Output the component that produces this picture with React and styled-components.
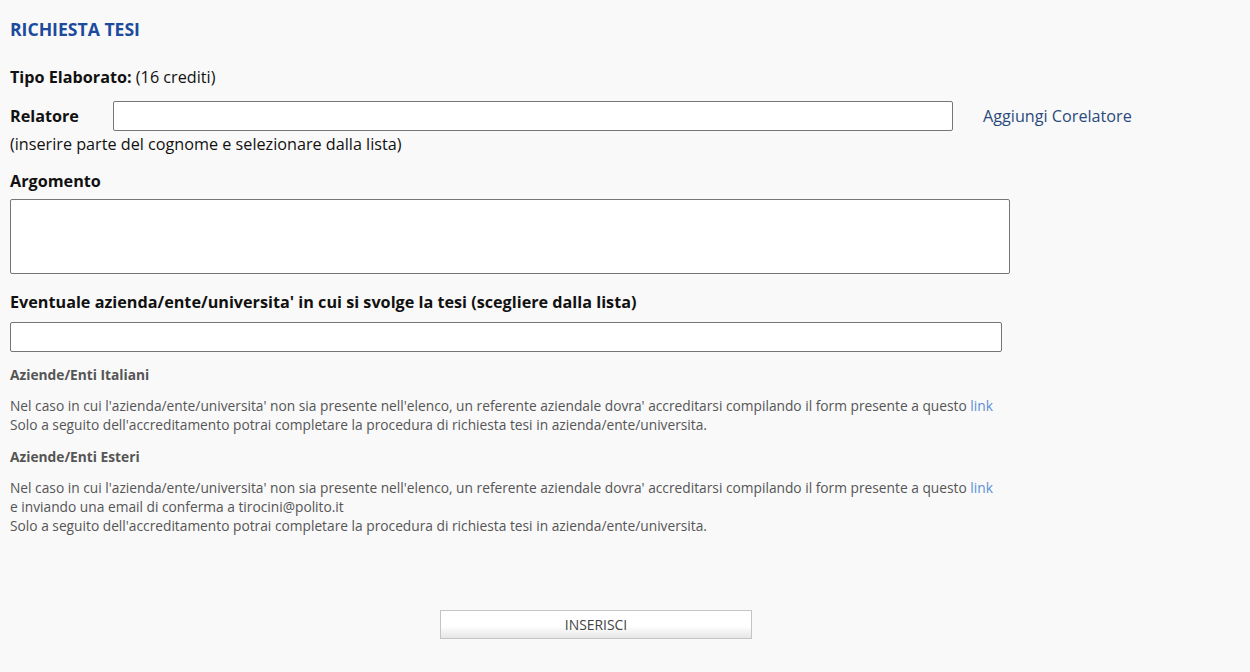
import React from "react";
import styled, { createGlobalStyle } from "styled-components";

const GlobalStyle = createGlobalStyle`
	html, body {
		margin: 0;
		padding: 0;
		background: #f9f9f9;
		font-family: "Open Sans", "Liberation Sans", sans-serif;
		color: #111;
	}
`;

const Page = styled.div`
	padding: 18px 10px 0 10px;
	width: 1230px;
	min-height: 672px;
	box-sizing: border-box;
`;

const Title = styled.h1`
	margin: 0 0 26px 0;
	font-size: 17.6px;
	font-weight: 700;
	line-height: 22px;
	color: #1c4a9c;
`;

const Line = styled.div`
	font-size: 16.2px;
	line-height: 22px;
	margin-bottom: ${(p) => p.$mb || 0}px;
`;

const Strong = styled.span`
	font-weight: 700;
`;

const RelatoreRow = styled.div`
	display: flex;
	align-items: center;
	height: 30px;
	margin-top: -1px;
`;

const Label = styled.label`
	display: block;
	font-size: 16.2px;
	font-weight: 700;
	line-height: 22px;
	width: ${(p) => (p.$width ? `${p.$width}px` : "auto")};
	flex: none;
	margin-bottom: ${(p) => p.$mb || 0}px;
`;

const TextInput = styled.input`
	box-sizing: border-box;
	width: ${(p) => p.$width}px;
	height: ${(p) => p.$height || 30}px;
	border: 1px solid #767676;
	border-radius: 2px;
	background: #fff;
	margin: 0;
	padding: 0 4px;
	font: inherit;
`;

const TextArea = styled.textarea`
	display: block;
	box-sizing: border-box;
	width: 1000px;
	height: 75px;
	border: 1px solid #767676;
	border-radius: 2px;
	background: #fff;
	margin: 0;
	resize: none;
	font: inherit;
`;

const AddLink = styled.a`
	margin-left: 30px;
	font-size: 16.2px;
	color: #2a4a7c;
	text-decoration: none;
	cursor: pointer;
`;

const Hint = styled.div`
	font-size: 16.2px;
	line-height: 22px;
	margin: 2px 0 15px 0;
`;

const Section = styled.div`
	margin-top: ${(p) => p.$mt || 0}px;
`;

const SubTitle = styled.div`
	font-size: 13.75px;
	font-weight: 700;
	color: #555;
	line-height: 19px;
	margin-bottom: ${(p) => p.$mb || 12}px;
`;

const Note = styled.p`
	margin: 0;
	font-size: 13.75px;
	line-height: 19px;
	color: #555;
`;

const NoteLink = styled.a`
	color: #5b8fd4;
	text-decoration: none;
`;

const ButtonRow = styled.div`
	display: flex;
	justify-content: flex-start;
	padding-left: 430px;
	margin-top: 75px;
`;

const SubmitButton = styled.button`
	box-sizing: border-box;
	width: 312px;
	height: 29px;
	border: 1px solid #c4c4c4;
	background: linear-gradient(#ffffff 0%, #ffffff 55%, #e6e6e6 100%);
	font-family: "Open Sans", "Liberation Sans", sans-serif;
	font-size: 13.9px;
	color: #444;
	cursor: pointer;
	padding: 0;
`;

export default function App() {
	return (
		<>
			<GlobalStyle />
			<Page>
				<Title>RICHIESTA TESI</Title>
				<Line $mb={14}>
					<Strong>Tipo Elaborato:</Strong> (16 crediti)
				</Line>
				<RelatoreRow>
					<Label $width={103}>Relatore</Label>
					<TextInput $width={840} />
					<AddLink>Aggiungi Corelatore</AddLink>
				</RelatoreRow>
				<Hint>(inserire parte del cognome e selezionare dalla lista)</Hint>
				<Label $mb={7}>Argomento</Label>
				<TextArea />
				<Section $mt={17}>
					<Label $mb={9}>
						Eventuale azienda/ente/universita' in cui si svolge la tesi (scegliere dalla lista)
					</Label>
					<TextInput $width={992} $height={30} />
				</Section>
				<Section $mt={13}>
					<SubTitle>Aziende/Enti Italiani</SubTitle>
					<Note>
						Nel caso in cui l'azienda/ente/universita' non sia presente nell'elenco, un referente aziendale dovra' accreditarsi compilando il form presente a questo <NoteLink>link</NoteLink>
					</Note>
					<Note>Solo a seguito dell'accreditamento potrai completare la procedura di richiesta tesi in azienda/ente/universita.</Note>
				</Section>
				<Section $mt={13}>
					<SubTitle>Aziende/Enti Esteri</SubTitle>
					<Note>
						Nel caso in cui l'azienda/ente/universita' non sia presente nell'elenco, un referente aziendale dovra' accreditarsi compilando il form presente a questo <NoteLink>link</NoteLink>
					</Note>
					<Note>e inviando una email di conferma a tirocini@polito.it</Note>
					<Note>Solo a seguito dell'accreditamento potrai completare la procedura di richiesta tesi in azienda/ente/universita.</Note>
				</Section>
				<ButtonRow>
					<SubmitButton>INSERISCI</SubmitButton>
				</ButtonRow>
			</Page>
		</>
	);
}
